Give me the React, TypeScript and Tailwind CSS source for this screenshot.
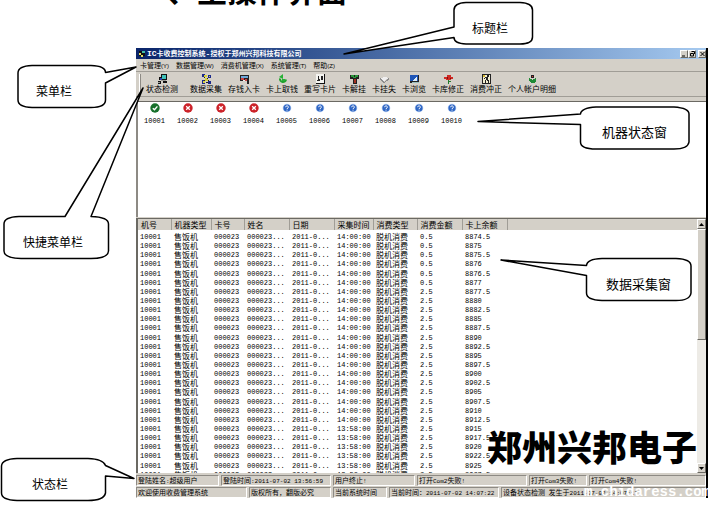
import React from 'react';

const SONG = "font-['Noto_Sans_CJK_SC',sans-serif]";

/* Song-style screens set Latin runs narrower than the Chinese text around them. */
function Mixed({ text, latin }: { text: string; latin: string }) {
  return (
    <>
      {text.split(/([\x20-\x7e]+)/).map((part, i) =>
        i % 2 === 1 ? (
          <span key={i} className={latin}>
            {part}
          </span>
        ) : (
          part
        ),
      )}
    </>
  );
}

const MONO6 = "font-['Liberation_Mono',monospace] text-[6px]";

const menus = ['卡管理(Y)', '数据管理(W)', '消费机管理(X)', '系统管理(T)', '帮助(Z)'];

type Px = [string, string];

const art: Record<string, Px[]> = {
  detect: [
    ['#111', 'M4 0h6v6H4zM2 3h3v3H2zM1 7h3v3H1zM6 7h4v2H6z'],
    ['#3fc1b8', 'M5 1h4v4H5z'],
    ['#2645b0', 'M3 4h2v2H3z'],
    ['#9a9a94', 'M4 6h5v1H4zM1 8h2v1H1z'],
  ],
  collect: [
    ['#1b2a8c', 'M1 0h3v3H1zM7 1h3v3H7zM1 6h3v4H1zM7 7h3v3H7z'],
    ['#d7d23a', 'M3 1h3v2H3zM4 4h3v3H4zM2 7h2v2H2zM8 2h1v1H8z'],
    ['#222', 'M3 3h1v1H3zM6 4h1v1H6zM3 6h1v1H3zM7 6h1v1H7zM5 8h2v1H5z'],
  ],
  save: [
    ['#222', 'M1 1h9v6H1zM8 7h2v3H8z'],
    ['#6da7d9', 'M2 2h7v2H2z'],
    ['#c44', 'M2 4h3v2H2zM6 5h2v2H6z'],
    ['#eee', 'M4 6h2v1H4z'],
  ],
  rewrite: [
    ['#111', 'M1 0h9v10H1z'],
    ['#f4f4f0', 'M1 0h8v9H1z'],
    ['#222', 'M3 2h1v4H3zM6 2h2v4H6zM4 5h1v2H4zM2 6h3v1H2z'],
  ],
  release: [
    ['#222', 'M1 1h9v4H1zM4 4h4v6H4z'],
    ['#2b9a3c', 'M2 1h3v2H2zM6 1h3v2H6zM4 3h3v1H4z'],
    ['#a03020', 'M5 5h2v4H5z'],
  ],
  lost: [
    ['#8c8c8c', 'M1 4l4 4 5-4v2L5 9 1 6z'],
    ['#efefef', 'M1 4l5-1 4 1-5 3z'],
  ],
  browse: [
    ['#222', 'M1 1h9v8H1z'],
    ['#1f56b8', 'M1 1h8v6H1z'],
    ['#dff0fb', 'M8 2v5H3z'],
    ['#9bb', 'M3 8h7v1H3z'],
  ],
  fix: [
    ['#cf2a24', 'M1 3h3V1h4v2h2v2H8v1H3V5H1z'],
    ['#731414', 'M4 3h1v2H4zM7 4h1v1H7z'],
    ['#217a2b', 'M5 6h1v4H5zM6 7h2v1H6z'],
  ],
  reverse: [
    ['#222', 'M1 0h9v10H1z'],
    ['#f3efd2', 'M2 1h7v8H2z'],
    ['#222', 'M6 1h2v2H6zM4 3h3v1H4zM3 4h1v1H3zM5 4h2v2H5zM6 6h2v1H6zM4 6h1v3H4zM7 7h1v2H7z'],
    ['#d2b42b', 'M2 1h2v2H2z'],
  ],
  account: [
    ['#222', 'M4 1h3v3H4z'],
    ['#d33', 'M5 2h1v1H5z'],
    ['#1e8b35', 'M2 4h1v1h2v1h1V5h2V4h1v3L7 9H4L2 7z'],
  ],
};

function ToolIcon({ name }: { name: string }) {
  if (name === 'withdraw') {
    return (
      <svg viewBox="0 0 11 10" className="h-[10px] w-[11px]" aria-hidden="true">
        <path d="M3 4.500a3 3 0 1 0 6 1" fill="none" stroke="#1ea32c" strokeWidth="2" />
        <path d="M2 3 6 0v5zM5 5h3v2H5z" fill="#26b136" />
      </svg>
    );
  }
  return (
    <svg viewBox="0 0 11 10" className="h-[10px] w-[11px]" shapeRendering="crispEdges" aria-hidden="true">
      {art[name].map(([fill, d], i) => (
        <path key={i} fill={fill} d={d} />
      ))}
    </svg>
  );
}

const tools = [
  { label: '状态检测', icon: 'detect' },
  { label: '数据采集', icon: 'collect' },
  { label: '存钱入卡', icon: 'save' },
  { label: '卡上取钱', icon: 'withdraw' },
  { label: '重写卡片', icon: 'rewrite' },
  { label: '卡解挂', icon: 'release' },
  { label: '卡挂失', icon: 'lost' },
  { label: '卡浏览', icon: 'browse' },
  { label: '卡库修正', icon: 'fix' },
  { label: '消费冲正', icon: 'reverse' },
  { label: '个人帐户明细', icon: 'account' },
];

const machines = [
  { id: '10001', state: 'ok' },
  { id: '10002', state: 'error' },
  { id: '10003', state: 'error' },
  { id: '10004', state: 'error' },
  { id: '10005', state: 'unknown' },
  { id: '10006', state: 'unknown' },
  { id: '10007', state: 'unknown' },
  { id: '10008', state: 'unknown' },
  { id: '10009', state: 'unknown' },
  { id: '10010', state: 'unknown' },
];

function StateIcon({ state }: { state: string }) {
  if (state === 'ok') {
    return (
      <svg viewBox="0 0 10 10" className="size-[10px]" aria-hidden="true">
        <circle cx="5" cy="5" r="4.700" fill="#17702a" />
        <path d="M2.800 5.200 4.500 6.800 7.400 3.400" fill="none" stroke="#fff" strokeWidth="1.400" />
      </svg>
    );
  }
  if (state === 'error') {
    return (
      <svg viewBox="0 0 10 10" className="size-[10px]" aria-hidden="true">
        <circle cx="5" cy="5" r="4.700" fill="#cc2229" />
        <path d="M3.200 3.200 6.800 6.800M6.800 3.200 3.200 6.800" stroke="#fff" strokeWidth="1.300" />
      </svg>
    );
  }
  return (
    <svg viewBox="0 0 10 10" className="size-[10px]" aria-hidden="true">
      <circle cx="5" cy="5" r="4.300" fill="#b9d0f2" />
      <circle cx="5" cy="5" r="3.600" fill="#2f66c4" />
      <path d="M3.600 4.200C3.600 2.400 6.500 2.500 6.400 4.200 6.300 5 5 5 5 6M5 6.700v.9" fill="none" stroke="#fff" strokeWidth="1" />
    </svg>
  );
}

const columns = [
  { name: '机号', w: 'w-[33px]' },
  { name: '机器类型', w: 'w-[40px]' },
  { name: '卡号', w: 'w-[33px]' },
  { name: '姓名', w: 'w-[45px]' },
  { name: '日期', w: 'w-[45px]' },
  { name: '采集时间', w: 'w-[39px]' },
  { name: '消费类型', w: 'w-[44px]' },
  { name: '消费金额', w: 'w-[45px]' },
  { name: '卡上余额', w: 'w-[45px]' },
];

const balances = [
  '8874.5', '8875', '8875.5', '8876', '8876.5', '8877', '8877.5', '8880', '8882.5',
  '8885', '8887.5', '8890', '8892.5', '8895', '8897.5', '8900', '8902.5', '8905',
  '8907.5', '8910', '8912.5', '8915', '8917.5', '8920', '8922.5', '8925', '8927.5',
];

const records = balances.map((balance, i) => [
  '10001',
  '售饭机',
  '000023',
  '000023...',
  '2011-0...',
  i < 21 ? '14:00:00' : '13:58:00',
  '脱机消费',
  i < 6 ? '0.5' : '2.5',
  balance,
]);

const RAISED = 'border border-t-white border-l-white border-r-[#6b6963] border-b-[#6b6963] bg-[#d4d0c8]';
const SUNKEN = 'border border-t-[#8d8a84] border-l-[#8d8a84] border-r-white border-b-white';

function WindowButton({ label, d }: { label: string; d: string }) {
  return (
    <button type="button" aria-label={label} className={`flex h-[8px] w-[8px] items-center justify-center ${RAISED}`}>
      <svg viewBox="0 0 7 6" className="h-[6px] w-[7px] shrink-0" aria-hidden="true">
        <path d={d} fill="none" stroke="#000" strokeWidth="1" />
      </svg>
    </button>
  );
}

function ScrollButton({ label, d }: { label: string; d: string }) {
  return (
    <button type="button" aria-label={label} className={`flex h-[10px] w-full shrink-0 items-center justify-center ${RAISED}`}>
      <svg viewBox="0 0 5 3" className="h-[3px] w-[5px]" aria-hidden="true">
        <path d={d} />
      </svg>
    </button>
  );
}

function Field({ text, w }: { text: string; w: string }) {
  return (
    <div className={`h-[11px] overflow-hidden pl-px text-[7px] leading-[9px] whitespace-nowrap ${SUNKEN} ${w}`}>
      <Mixed text={text} latin={MONO6} />
    </div>
  );
}

const callouts = [
  {
    label: '标题栏',
    d: 'M466 2.500H520Q532.500 3 532.500 10V37Q532.500 44 520 44H466Q454 43.500 454 37.500L344 54 454 27V10Q454 3 466 2.500Z',
    at: 'left-[472px] top-[18px] text-[12px]',
  },
  {
    label: '菜单栏',
    d: 'M32 65.500H91Q105.500 66 105.500 72.500L136 67 105.500 83V100Q105.500 107.500 91 107.500H32Q18 107 18 100V73Q18 66 32 65.500Z',
    at: 'left-[36px] top-[81px] text-[12px]',
  },
  {
    label: '快捷菜单栏',
    d: 'M19 216.500H65L143 88 91 216.500Q108.500 217 108.500 224V251Q108 258.500 91 258.500H21Q4 258 4 251V224Q4 217 19 216.500Z',
    at: 'left-[23px] top-[232px] text-[12px]',
  },
  {
    label: '机器状态窗',
    d: 'M596 107H674Q689 108 689 114V142Q688 149 674 149H596Q580.500 149 580.500 142V124.500L478 121.500 580.500 114Q581 108 596 107Z',
    at: 'left-[602px] top-[122px] text-[13px]',
  },
  {
    label: '数据采集窗',
    d: 'M602 258.500H676Q691 259 691 266V293Q690 300.500 676 300.500H602Q586.500 300 586.500 293V275.500L501 260 586.500 265.500Q587 259 602 258.500Z',
    at: 'left-[606px] top-[274px] text-[13px]',
  },
  {
    label: '状态栏',
    d: 'M17 458.500H88Q103 459 105.500 465.500L134 478.500 105.500 476V493Q104 500.500 88 500.500H17Q1.500 500 1.500 493V466Q2 459 17 458.500Z',
    at: 'left-[32px] top-[474px] text-[12px]',
  },
];

export default function App() {
  return (
    <div className={`relative min-h-screen overflow-hidden bg-white text-black ${SONG}`}>
      <div className="flex h-[48px] flex-col items-start overflow-hidden pl-[167px]">
        <h1 className="-mt-[33px] text-[30px] leading-[44px] font-bold">、主操作界面</h1>
      </div>

      <main className="mr-[6px] ml-[136px] border-r-2 border-black bg-[#d4d0c8]">
        <header className="flex h-[11px] items-center bg-linear-to-r from-[#0a246a] to-[#a6caf0] pl-[2px]">
          <svg viewBox="0 0 8 8" className="mr-px size-[8px]" shapeRendering="crispEdges" aria-hidden="true">
            <path fill="#111" d="M1 1h6v5H1z" />
            <path fill="#3fc1a8" d="M4 1h3v2H4z" />
            <path fill="#e3dc62" d="M1 3h2v2H1zM3 5h2v2H3z" />
          </svg>
          <span className="text-[7px] leading-[11px] font-bold whitespace-nowrap text-white">
            <Mixed text="IC卡收费控制系统-授权于郑州兴邦科技有限公司" latin="font-['Liberation_Mono',monospace] text-[8px]" />
          </span>
          <div className="ml-auto flex">
            <WindowButton label="最小化" d="M1 5h3" />
            <WindowButton label="还原" d="M2.500 .5h3v2.500M1.500 2.500h3v2.500h-3z" />
            <span className="w-[2px]" />
            <WindowButton label="关闭" d="M1.500 1 5.500 5M5.500 1 1.500 5" />
          </div>
        </header>

        <nav className="flex h-[12px] items-center gap-[7px] pl-[4px] text-[7px] leading-[12px]">
          {menus.map((m) => (
            <button key={m} type="button" className="whitespace-nowrap">
              <Mixed text={m} latin="font-['Liberation_Sans',sans-serif] text-[6px]" />
            </button>
          ))}
        </nav>

        <div className="flex h-[26px] items-start border-y border-t-[#a09d96] border-b-[#a09d96] pt-[2px] pl-[3px]">
          <span className="mr-[5px] h-[20px] w-[2px] border-r border-l border-l-white border-r-[#8d8a84]" />
          <div className="flex gap-[6px]">
            {tools.map((t) => (
              <button key={t.label} type="button" className="flex shrink-0 flex-col items-center text-[8px] leading-[9px] whitespace-nowrap first:mr-[6px]">
                <ToolIcon name={t.icon} />
                <span>{t.label}</span>
              </button>
            ))}
          </div>
        </div>
        <div className="h-[5px] border-b border-[#6b6963]" />

        <section aria-label="机器状态" className="flex h-[115px] items-start border-l-2 border-[#8d8a84] bg-white pt-[1px]">
          {machines.map((m) => (
            <div key={m.id} className="flex w-[33px] flex-col items-center">
              <StateIcon state={m.state} />
              <span className="mt-[4px] font-['Liberation_Mono',monospace] text-[7px] leading-[8px]">{m.id}</span>
            </div>
          ))}
        </section>

        <section aria-label="采集数据" className="mt-[1px] flex h-[255px] border-t border-l-2 border-[#6b6963] bg-white">
          <div className="min-w-0 flex-1 overflow-hidden">
            <table className="h-[260px] w-full table-fixed border-collapse text-left text-[8px] leading-[9px]">
              <thead>
                <tr className="h-[11px] bg-[#d4d0c8]">
                  {columns.map((c) => (
                    <th key={c.name} scope="col" className={`h-[11px] border-r border-r-[#a09d96] py-0 pr-0 pl-[3px] font-normal whitespace-nowrap ${c.w}`}>
                      {c.name}
                    </th>
                  ))}
                  <td className="h-[11px] p-0" />
                </tr>
                <tr className="h-[2px]">
                  <td colSpan={10} className="h-[2px] p-0" />
                </tr>
              </thead>
              <tbody>
                {records.map((r, i) => (
                  <tr key={i}>
                    {r.map((v, j) => (
                      <td key={j} className={`p-0 whitespace-nowrap ${j === 0 ? 'pl-[2px]' : 'pl-[3px]'}`}>
                        <span className={`block h-[9px] ${j === 1 || j === 6 ? '' : "font-['Liberation_Mono',monospace] text-[7px] leading-[10px]"}`}>{v}</span>
                      </td>
                    ))}
                    <td className="p-0" />
                  </tr>
                ))}
              </tbody>
            </table>
          </div>
          <div className="flex w-[9px] shrink-0 flex-col bg-[#edebe6]">
            <ScrollButton label="向上滚动" d="M0 3h5L2.500 0z" />
            <div className={`h-[111px] ${RAISED}`} />
            <div className="flex-1" />
            <ScrollButton label="向下滚动" d="M0 0h5L2.500 3z" />
          </div>
        </section>

        <footer className="flex flex-col gap-px pt-[2px]">
          <div className="flex gap-[2px]">
            <Field text="登陆姓名:超级用户" w="w-[83px]" />
            <Field text="登陆时间:2011-07-02 13:56:59" w="w-[110px]" />
            <Field text="用户终止!" w="w-[82px]" />
            <Field text="打开Com2失败!" w="w-[110px]" />
            <Field text="打开Com3失败!" w="w-[58px]" />
            <Field text="打开Com4失败!" w="min-w-0 flex-1" />
          </div>
          <div className="flex gap-[2px]">
            <Field text="欢迎使用收费管理系统" w="w-[111px]" />
            <Field text="版权所有，翻版必究" w="w-[82px]" />
            <Field text="当前系统时间" w="w-[54px]" />
            <Field text="当前时间：2011-07-02 14:07:22" w="w-[110px]" />
            <Field text="设备状态检测 发生于2011-07-02 14:07:17" w="min-w-0 flex-1" />
          </div>
        </footer>
      </main>

      {/* Annotation layer pinned over the program window */}
      <svg viewBox="0 0 714 507" className="pointer-events-none absolute top-0 left-0 h-[507px] w-[714px]" aria-hidden="true">
        {callouts.map((c) => (
          <path key={c.label} d={c.d} fill="#fff" stroke="#000" strokeWidth="1.500" strokeLinejoin="round" />
        ))}
      </svg>
      {callouts.map((c) => (
        <span key={c.label} className={`absolute leading-[20px] whitespace-nowrap ${c.at}`}>
          {c.label}
        </span>
      ))}

      <p className="absolute top-[421px] left-[487px] text-[35px] leading-[50px] font-black whitespace-nowrap">郑州兴邦电子</p>
      <p className="absolute top-[485px] left-[584px] font-['Liberation_Mono',monospace] text-[14px] leading-[14px] font-bold whitespace-nowrap text-white">m.chidaress.com</p>
    </div>
  );
}
